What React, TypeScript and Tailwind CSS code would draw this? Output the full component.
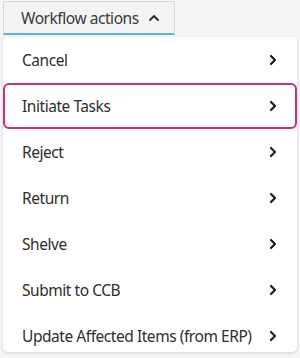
import React from "react";

const items = [
  "Cancel",
  "Initiate Tasks",
  "Reject",
  "Return",
  "Shelve",
  "Submit to CCB",
  "Update Affected Items (from ERP)",
];

function ChevronRight() {
  return (
    <svg width="10" height="12" viewBox="0 0 10 12" className="shrink-0">
      <polyline points="3,2 7,6 3,10" fill="none" stroke="#1a1a1a" strokeWidth="2.2" strokeLinecap="round" strokeLinejoin="round" />
    </svg>
  );
}

export default function App() {
  return (
    <div
      className="w-[300px] h-[358px] bg-[#f5f5f5] overflow-hidden pt-px px-[3px]"
      style={{ fontFamily: '"Noto Sans", sans-serif' }}
    >
      <button className="w-[172px] h-[34px] flex items-center gap-[9px] pl-[17px] pt-[2px] bg-[#f3f3f3] border border-[#d8d8d8] border-b-2 border-b-[#5ab1e2] rounded-t-[2px] text-[15.5px] tracking-[-0.45px] text-[#3a3a3a]">
        <span>Workflow actions</span>
        <svg width="12" height="10" viewBox="0 0 12 10" className="-mt-[2px]">
          <polyline points="2,7 6,3 10,7" fill="none" stroke="#333" strokeWidth="2" strokeLinecap="round" strokeLinejoin="round" />
        </svg>
      </button>
      <div className="mt-[2px] w-[294px] h-[315px] bg-white rounded-[5px] shadow-[0_1px_3px_rgba(0,0,0,0.15)] overflow-hidden">
        {items.map((label, i) => (
          <div
            key={label}
            className={
              i === 1
                ? "h-[46px] flex items-center justify-between pl-[17px] pr-[17px] border-2 border-[#c8307a] rounded-[6px]"
                : "h-[46px] flex items-center justify-between pl-[19px] pr-[19px]"
            }
          >
            <span className="text-[15.5px] tracking-[-0.45px] text-[#2e2e2e] pt-[2px]">{label}</span>
            <ChevronRight />
          </div>
        ))}
      </div>
    </div>
  );
}
